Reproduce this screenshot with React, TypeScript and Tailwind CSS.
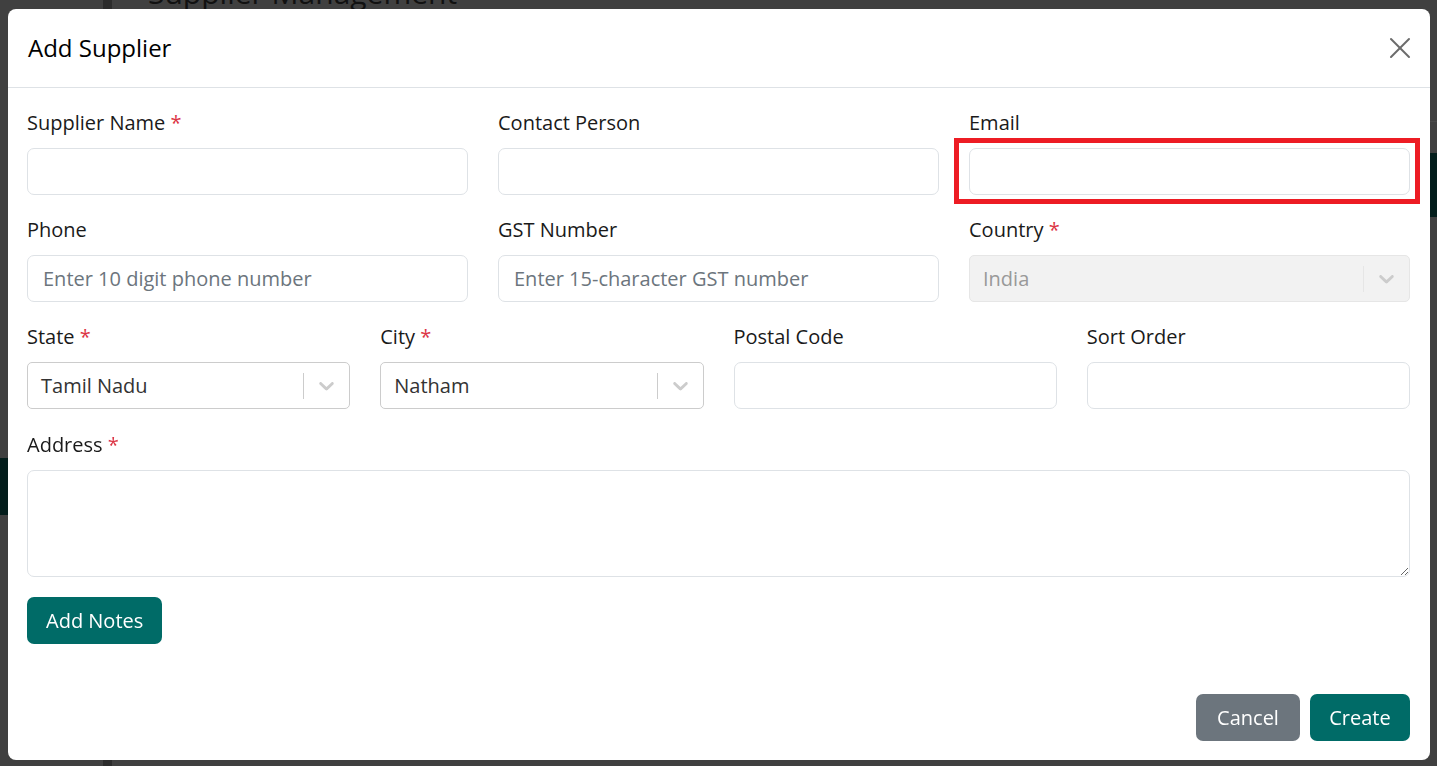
const font = "font-['Open_Sans','Liberation_Sans',sans-serif]";

const Chevron = () => (
  <svg viewBox="0 0 20 20" className="w-[25px] h-[25px] fill-[#cccccc]">
    <path d="M4.516 7.548c0.436-0.446 1.043-0.481 1.576 0l3.908 3.747 3.908-3.747c0.533-0.481 1.141-0.446 1.574 0 0.436 0.445 0.408 1.197 0 1.615-0.406 0.418-4.695 4.502-4.695 4.502-0.217 0.223-0.502 0.335-0.787 0.335s-0.57-0.112-0.789-0.335c0 0-4.287-4.084-4.695-4.502s-0.436-1.17 0-1.615z" />
  </svg>
);

const CloseIcon = () => (
  <svg viewBox="0 0 22 22" className="w-[22px] h-[22px]" stroke="#6b6b6b" strokeWidth="2" strokeLinecap="round">
    <line x1="2" y1="2" x2="20" y2="20" />
    <line x1="20" y1="2" x2="2" y2="20" />
  </svg>
);

const Label = ({ text, required }: { text: string; required?: boolean }) => (
  <label className="block text-[20px] leading-[30px] mb-[10px] text-[#1a1a1a]">
    {text}
    {required && <span className="text-[#dc3545]"> *</span>}
  </label>
);

const TextInput = ({ placeholder }: { placeholder?: string }) => (
  <input
    type="text"
    placeholder={placeholder}
    className="w-full h-[47px] rounded-[7px] border border-[#dee2e6] bg-white px-[15px] text-[20px] text-[#212529] placeholder:text-[#6c757d] outline-none"
  />
);

const SelectBox = ({ value, disabled }: { value: string; disabled?: boolean }) => (
  <div
    className={
      disabled
        ? "flex items-center h-[47px] rounded-[5px] border border-[#e6e6e6] bg-[#f2f2f2]"
        : "flex items-center h-[47px] rounded-[5px] border border-[#cccccc] bg-white"
    }
  >
    <span className={disabled ? "flex-1 pl-[13px] text-[20px] text-[#999999]" : "flex-1 pl-[13px] text-[20px] text-[#333333]"}>
      {value}
    </span>
    <span className={disabled ? "w-px h-[26px] bg-[#e6e6e6]" : "w-px h-[26px] bg-[#cccccc]"} />
    <span className="w-[45px] flex items-center justify-center">
      <Chevron />
    </span>
  </div>
);

const Field = ({ label, required, children }: { label: string; required?: boolean; children: React.ReactNode }) => (
  <div className="mb-5">
    <Label text={label} required={required} />
    {children}
  </div>
);

export default function App() {
  return (
    <div className={`relative h-screen overflow-hidden bg-[#404040] ${font}`}>
      {/* page behind the backdrop */}
      <div className="flex h-full">
        <aside className="w-[103px] pt-[458px]">
          <div className="h-[57px] bg-[#031d1b]" />
        </aside>
        <div className="w-[9px] bg-[#2c2c2c]" />
        <main className="flex-1 pl-9">
          <h1 className="mt-[-24px] text-[30px] leading-[34px] font-medium text-[#111111]">Supplier Management</h1>
          <div className="h-[112px] border-b border-[#4a4a4a]" />
          <div className="mt-[31px] h-[64px] bg-[#031d1b]" />
        </main>
      </div>

      {/* modal */}
      <div className="fixed inset-0 pt-[9px] pl-2 pr-[7px] pb-[6px]">
        <div className="h-full bg-white rounded-lg flex flex-col">
          <div className="h-[79px] flex items-center justify-between px-5 border-b border-[#dee2e6]">
            <h2 className="text-[24px] font-medium text-[#000000]">Add Supplier</h2>
            <button className="mr-[-1px]">
              <CloseIcon />
            </button>
          </div>

          <div className="flex-1 px-5 pt-5 pl-[19px]">
            <div className="grid grid-cols-3 gap-x-[30px]">
              <Field label="Supplier Name" required>
                <TextInput />
              </Field>
              <Field label="Contact Person">
                <TextInput />
              </Field>
              <Field label="Email">
                <div className="relative">
                  <TextInput />
                  <div className="absolute -left-[15px] -right-[10px] -top-[10px] -bottom-[9px] border-[5px] border-[#ed1c24] pointer-events-none" />
                </div>
              </Field>

              <Field label="Phone">
                <TextInput placeholder="Enter 10 digit phone number" />
              </Field>
              <Field label="GST Number">
                <TextInput placeholder="Enter 15-character GST number" />
              </Field>
              <Field label="Country" required>
                <SelectBox value="India" disabled />
              </Field>
            </div>

            <div className="grid grid-cols-4 gap-x-[30px]">
              <Field label="State" required>
                <SelectBox value="Tamil Nadu" />
              </Field>
              <Field label="City" required>
                <SelectBox value="Natham" />
              </Field>
              <Field label="Postal Code">
                <TextInput />
              </Field>
              <Field label="Sort Order">
                <TextInput />
              </Field>
            </div>

            <div className="mt-px">
              <Field label="Address" required>
                <textarea className="block w-full h-[107px] rounded-[7px] border border-[#dee2e6] px-[15px] py-2 text-[20px] outline-none" />
              </Field>
            </div>

            <button className="h-[47px] px-[19px] rounded-[7px] bg-[#006b67] text-white text-[20px] font-medium">
              Add Notes
            </button>
          </div>

          <div className="flex justify-end gap-[10px] px-5 pb-[19px]">
            <button className="h-[47px] w-[104px] rounded-[7px] bg-[#6c757d] text-white text-[20px] font-medium">Cancel</button>
            <button className="h-[47px] w-[100px] rounded-[7px] bg-[#006b67] text-white text-[20px] font-medium">Create</button>
          </div>
        </div>
      </div>
    </div>
  );
}
